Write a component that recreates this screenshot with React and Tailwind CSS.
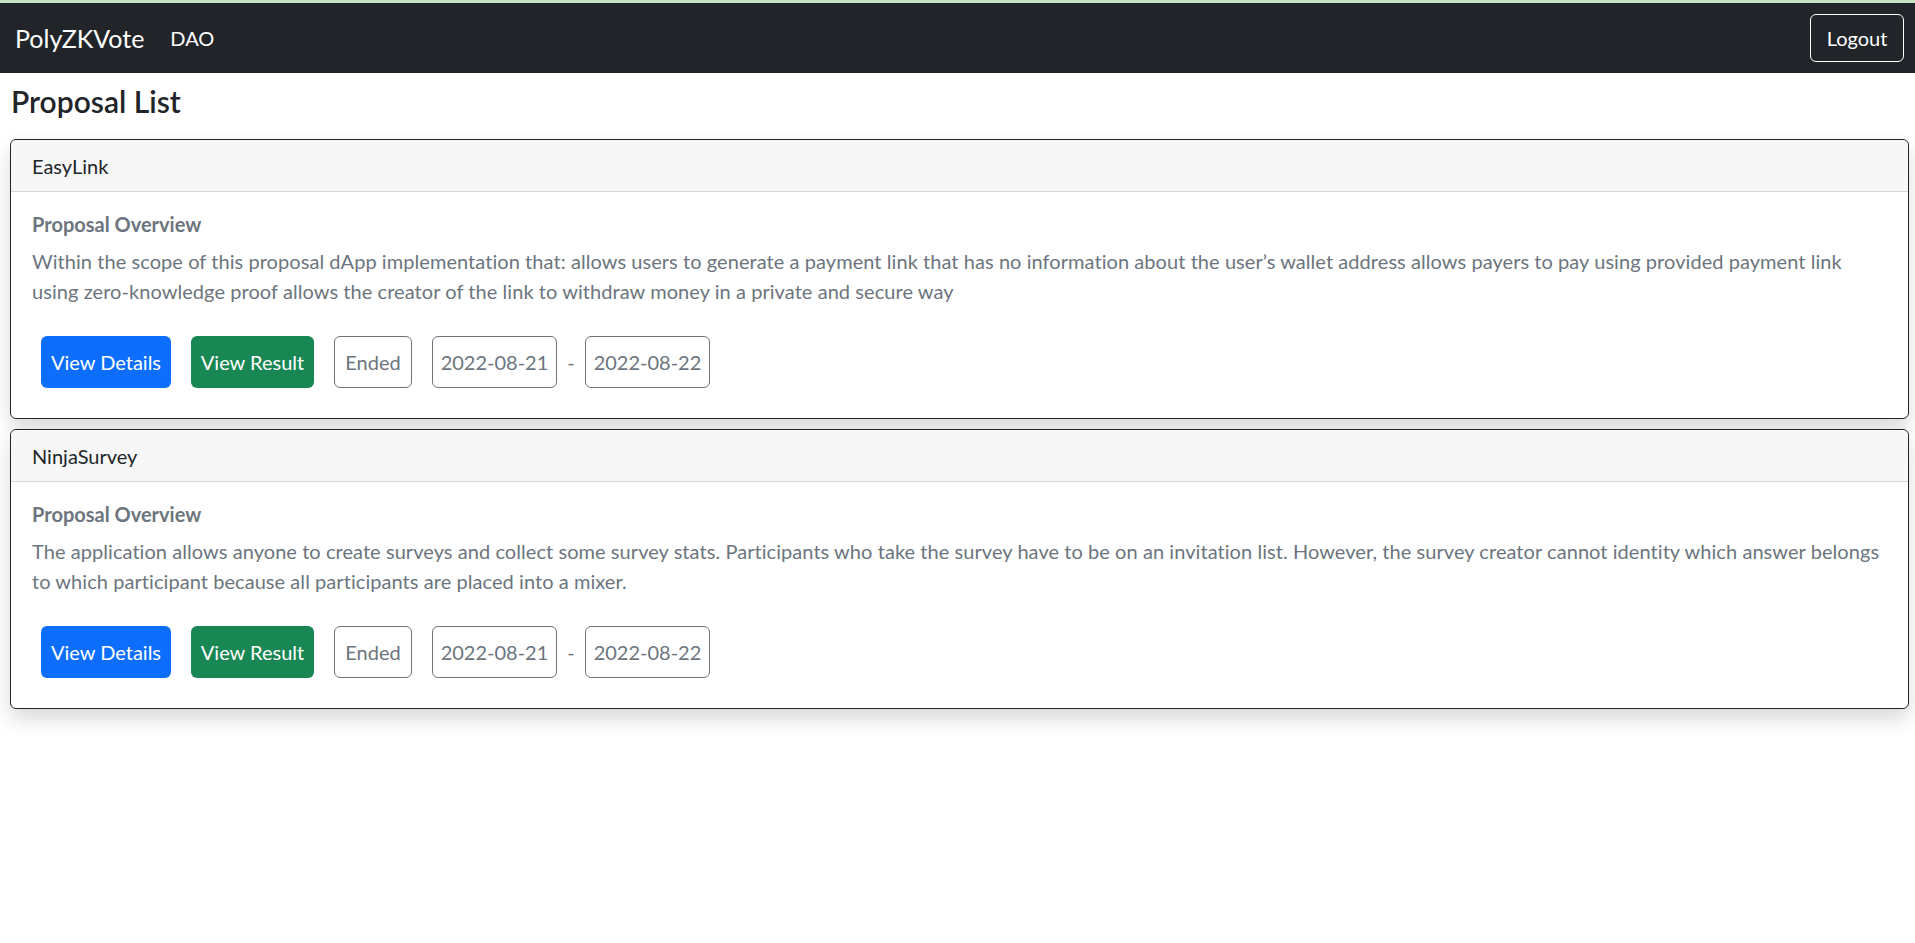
import React from "react";

const proposals = [
  {
    title: "EasyLink",
    text: "Within the scope of this proposal dApp implementation that: allows users to generate a payment link that has no information about the user’s wallet address allows payers to pay using provided payment link using zero-knowledge proof allows the creator of the link to withdraw money in a private and secure way",
  },
  {
    title: "NinjaSurvey",
    text: "The application allows anyone to create surveys and collect some survey stats. Participants who take the survey have to be on an invitation list. However, the survey creator cannot identity which answer belongs to which participant because all participants are placed into a mixer.",
  },
];

function Card({ title, text }) {
  return (
    <div className="rounded-[6px] border border-[#212529] bg-white shadow-[0_10px_20px_rgba(0,0,0,0.15)]">
      <div className="flex h-[52px] items-center border-b border-[#d6d6d6] bg-[#f7f7f7] px-[21px] text-[20px] leading-[30px] text-[#212529] rounded-t-[6px]">
        {title}
      </div>
      <div className="px-[21px] pt-[20px] pb-[30px]">
        <h6 className="text-[20px] font-bold leading-[24px] text-[#6c757d]">Proposal Overview</h6>
        <p className="mt-[10px] text-[20px] leading-[30px] tracking-[0.06px] text-[#6c757d]">{text}</p>
        <div className="mt-[30px] flex items-center gap-[20px] pl-[9px]">
          <button className="h-[52px] w-[130px] rounded-[6px] bg-[#0d6efd] text-[20px] text-white">View Details</button>
          <button className="h-[52px] w-[123px] rounded-[6px] bg-[#198754] text-[20px] text-white">View Result</button>
          <div className="flex h-[52px] w-[78px] items-center justify-center rounded-[6px] border border-[#6c757d] text-[20px] text-[#6c757d]">Ended</div>
          <div className="flex items-center">
            <div className="flex h-[52px] w-[125px] items-center justify-center rounded-[6px] border border-[#6c757d] text-[20px] text-[#6c757d]">2022-08-21</div>
            <span className="w-[28px] text-center text-[20px] text-[#6c757d]">-</span>
            <div className="flex h-[52px] w-[125px] items-center justify-center rounded-[6px] border border-[#6c757d] text-[20px] text-[#6c757d]">2022-08-22</div>
          </div>
        </div>
      </div>
    </div>
  );
}

export default function App() {
  return (
    <div className="min-h-screen bg-white font-['Lato','Open_Sans',sans-serif]">
      <div className="h-[3px] bg-[#c9e2c3]" />
      <nav className="flex h-[70px] items-center bg-[#212529] pl-[15px] pr-[11px]">
        <span className="text-[25px] leading-[30px] text-white">PolyZKVote</span>
        <span className="ml-[26px] text-[20px] leading-[30px] text-white">DAO</span>
        <button className="ml-auto h-[48px] w-[94px] rounded-[6px] border border-white text-[20px] text-white">Logout</button>
      </nav>
      <main className="ml-[10px] mr-[6px]">
        <h4 className="mt-[10px] mb-[20px] pl-[1px] text-[30px] font-semibold leading-[36px] text-[#212529]">Proposal List</h4>
        <div className="flex flex-col gap-[10px]">
          {proposals.map((p) => (
            <Card key={p.title} {...p} />
          ))}
        </div>
      </main>
    </div>
  );
}
